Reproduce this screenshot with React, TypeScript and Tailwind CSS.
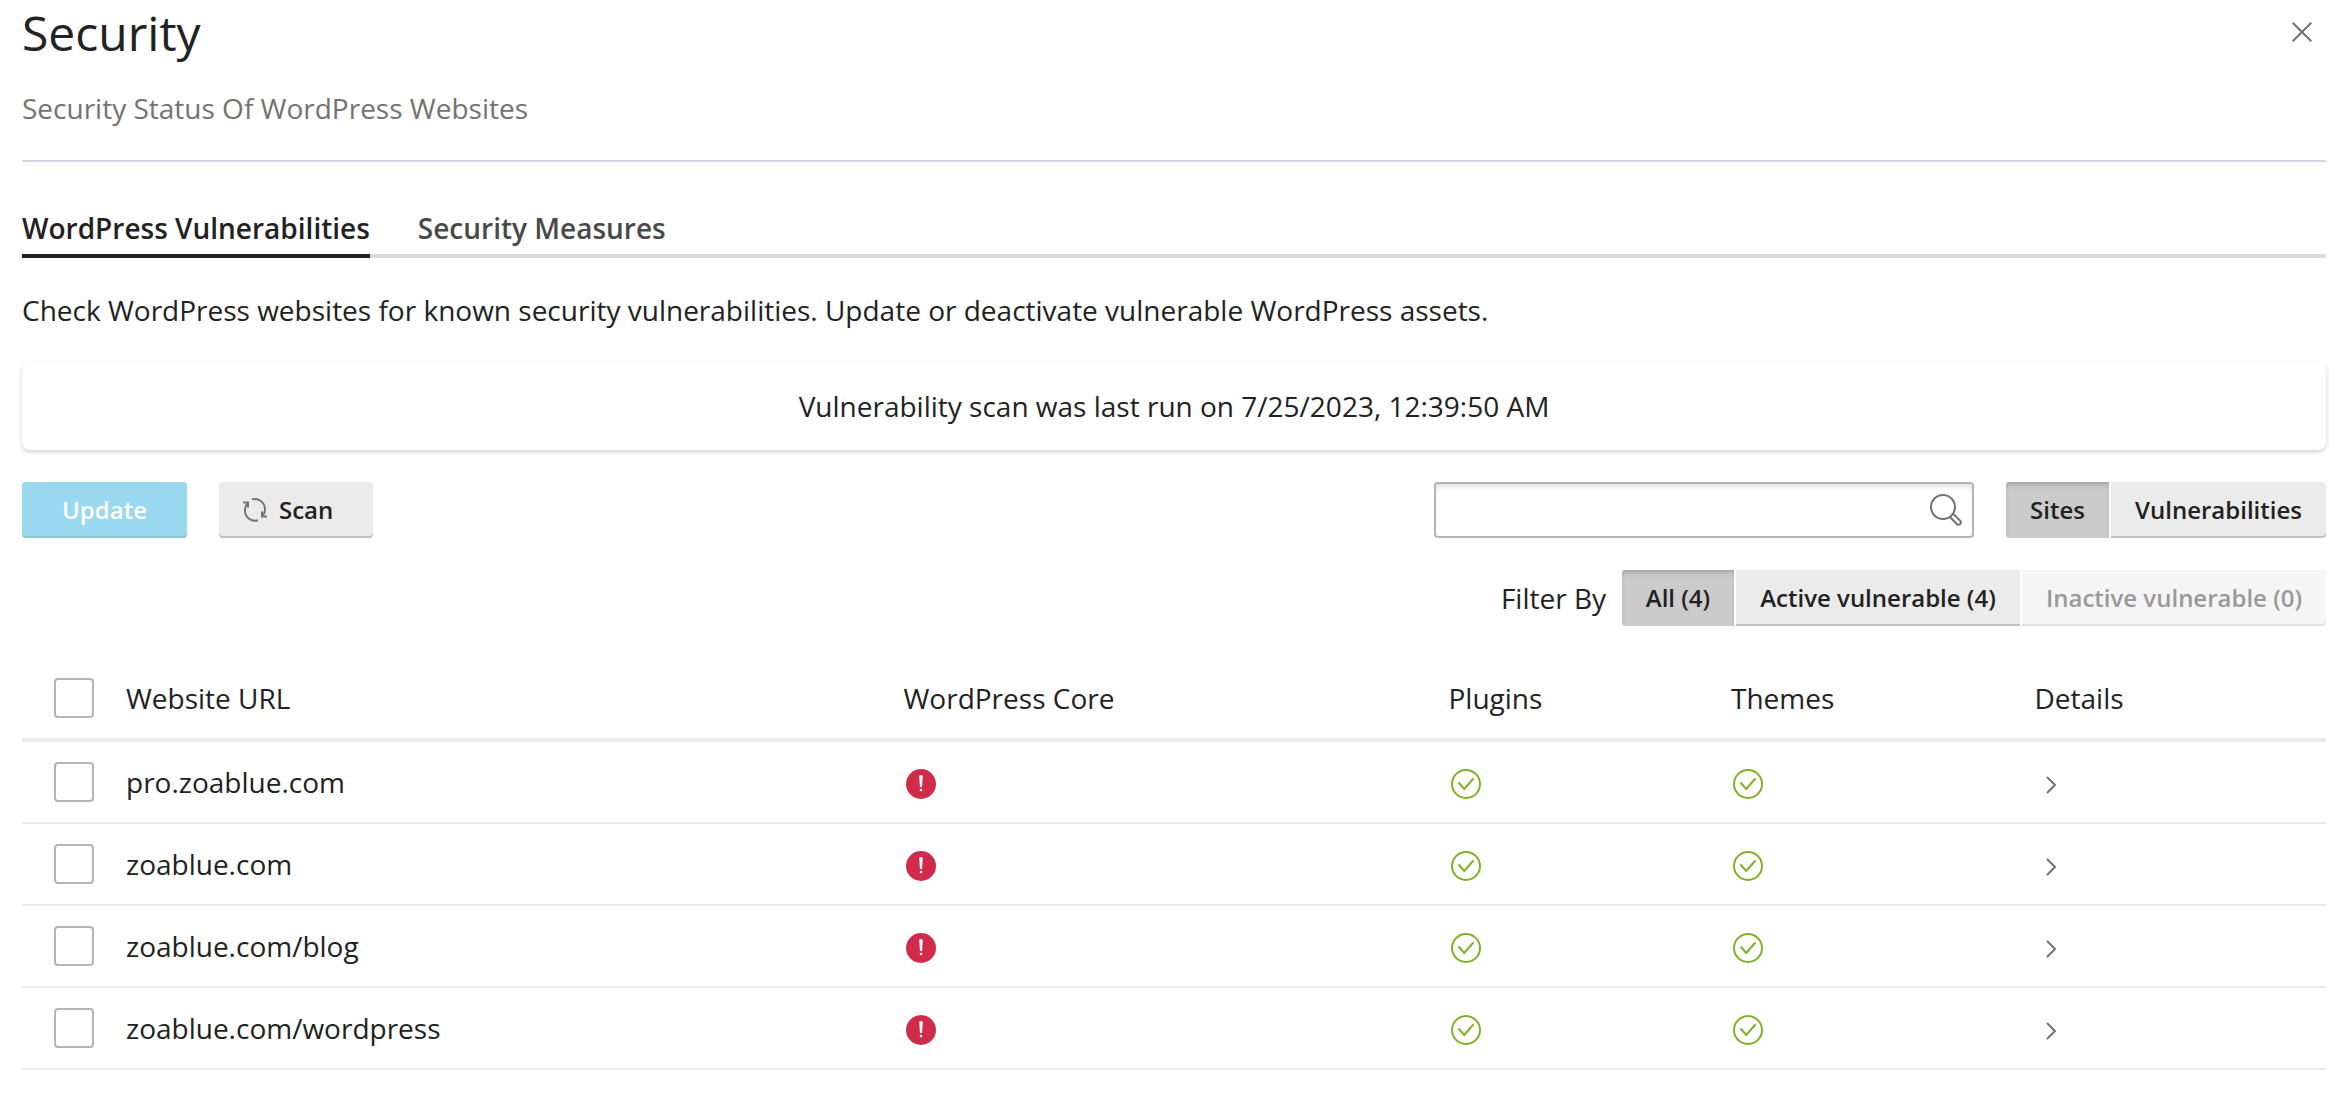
import React from "react";

const sites = ["pro.zoablue.com", "zoablue.com", "zoablue.com/blog", "zoablue.com/wordpress"];

const columns = "grid grid-cols-[104px_777.5px_545px_282.5px_303.5px_1fr] items-center";

function Checkbox() {
  return <span className="ml-8 block h-10 w-10 rounded-[4px] border-2 border-[#b4b4b4] bg-white" />;
}

function AlertIcon() {
  return (
    <svg className="mt-1 ml-0.5 h-[30px] w-[30px]" viewBox="0 0 30 30">
      <circle cx="15" cy="15" r="15" fill="#d12b4b" />
      <path d="M13.300 7.200q0-1.200 1.700-1.200t1.700 1.200l-.6 10.300q-.1.700-1.100.7t-1.100-.7z" fill="#fff" />
      <circle cx="15" cy="21" r="1.300" fill="#fff" />
    </svg>
  );
}

function OkIcon() {
  return (
    <svg className="mt-1 ml-0.5 h-[30px] w-[30px]" viewBox="0 0 30 30" fill="none" stroke="#7fb026" strokeWidth="2">
      <circle cx="15" cy="15" r="14" />
      <path d="M8 14l5.200 6L22 10" strokeLinecap="round" />
    </svg>
  );
}

function Chevron() {
  return (
    <svg className="mt-[5px] ml-[11.5px] h-[18px] w-[12px]" viewBox="0 0 12 18" fill="none" stroke="#737373" strokeWidth="2">
      <path d="M1.500 1.500L9 9l-7.500 7.500" strokeLinecap="round" strokeLinejoin="round" />
    </svg>
  );
}

const seg = "flex h-14 items-center justify-center text-[24px] font-semibold whitespace-nowrap";
const segOn = "bg-[#cbcbcb] shadow-[inset_0_2px_0_#acacac,inset_0_4px_4px_rgba(0,0,0,0.1)]";
const segOff = "bg-[#ebebeb] shadow-[inset_0_-2px_0_#c1c1c1]";

export default function App() {
  return (
    <div className="h-[1106px] w-[2352px] overflow-hidden bg-white pr-[26px] pl-[22px] font-['Open_Sans',sans-serif] text-[28px] leading-10 text-[#222222]">
      <header className="flex h-[162px] items-start justify-between border-b-2 border-[#d4d3df]">
        <div>
          <h1 className="mt-px text-[48px] leading-[64px]">Security</h1>
          <p className="mt-[23px] text-[#737373]">Security Status Of WordPress Websites</p>
        </div>
        <svg className="mt-[22px] mr-[14px] h-5 w-5" viewBox="0 0 20 20" stroke="#737373" strokeWidth="2">
          <path d="M.7.7l18.6 18.6M19.3.7L.7 19.3" />
        </svg>
      </header>

      <nav className="flex h-24 items-end gap-12 border-b-4 border-[#dcdcdc] font-semibold">
        <span className="-mb-1 h-[50px] border-b-4 border-[#222222]">WordPress Vulnerabilities</span>
        <span className="-mb-1 h-[50px] text-[#494949]">Security Measures</span>
      </nav>

      <p className="mt-8 h-10">Check WordPress websites for known security vulnerabilities. Update or deactivate vulnerable WordPress assets.</p>

      <section className="mt-8 flex h-[88px] items-center justify-center rounded-lg shadow-[0_2px_4px_rgba(0,0,0,0.2)]">
        Vulnerability scan was last run on 7/25/2023, 12:39:50 AM
      </section>

      <div className="mt-8 flex h-14 items-center">
        <button className="h-14 w-[165px] rounded-[4px] bg-[#9ad8ef] text-[24px] font-semibold text-white shadow-[inset_0_-2px_0_#8fc1d4]">Update</button>
        <button className="ml-8 flex h-14 w-[154px] items-center rounded-[4px] bg-[#ebebeb] pl-6 text-[24px] font-semibold shadow-[inset_0_-2px_0_#c1c1c1]">
          <svg className="mr-3 h-6 w-6" viewBox="0 0 24 24" fill="none" stroke="#737373" strokeWidth="2">
            <path d="M9 1.400C15.500-.6 22 4.500 22 11.500c0 2-.6 4-1.800 5.500M15 22.200C8.500 24.200 2 19.500 2 12.500c0-2.800 1-5.500 3-7.300" />
            <path d="M0 4.500h5v5M24 18.500h-5v-5" />
          </svg>
          Scan
        </button>
        <div className="ml-auto flex h-14 w-[540px] items-center justify-end rounded-[4px] border-2 border-[#b4b4b4] pr-2.5 shadow-[inset_0_4px_4px_rgba(0,0,0,0.09)]">
          <svg className="h-8 w-8" viewBox="0 0 32 32" fill="none" stroke="#737373" strokeWidth="2">
            <circle cx="13" cy="13" r="12" />
            <path d="M20.200 23.200L27 30.200a2.350 2.350 0 0 0 3.300-3.300L23.700 20.200" />
          </svg>
        </div>
        <div className="ml-8 flex gap-0.5">
          <span className={`${seg} ${segOn} w-[103px] rounded-l-[4px]`}>Sites</span>
          <span className={`${seg} ${segOff} w-[215px] rounded-r-[4px]`}>Vulnerabilities</span>
        </div>
      </div>

      <div className="mt-8 flex h-14 items-center justify-end">
        <span className="mr-4">Filter By</span>
        <div className="flex gap-0.5">
          <span className={`${seg} ${segOn} w-28 rounded-l-[4px]`}>All (4)</span>
          <span className={`${seg} ${segOff} w-[284px]`}>Active vulnerable (4)</span>
          <span className={`${seg} w-[304px] rounded-r-[4px] bg-[#f5f5f5] text-[#999999] shadow-[inset_0_-2px_0_#e0e0e0]`}>Inactive vulnerable (0)</span>
        </div>
      </div>

      <div className="mt-8">
        <div className={`${columns} h-[84px] border-b-4 border-[#ebebeb]`}>
          <Checkbox />
          <span>Website URL</span>
          <span>WordPress Core</span>
          <span>Plugins</span>
          <span>Themes</span>
          <span>Details</span>
        </div>
        {sites.map((site) => (
          <div key={site} className={`${columns} h-[82px] border-b-2 border-[#ebebeb]`}>
            <Checkbox />
            <span>{site}</span>
            <AlertIcon />
            <OkIcon />
            <OkIcon />
            <Chevron />
          </div>
        ))}
      </div>
    </div>
  );
}
